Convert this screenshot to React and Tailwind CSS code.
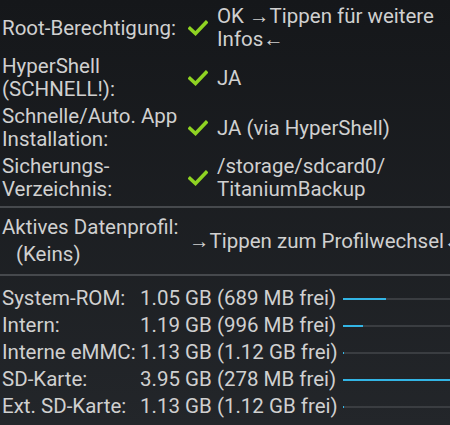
import React from 'react';

const Check = () => (
  <svg width="20" height="16" viewBox="0 0 20 16" className="shrink-0">
    <path d="M2 8.5 L7.5 13.5 L18 2.5" fill="none" stroke="#8fd322" strokeWidth="3.6" strokeLinecap="square" />
  </svg>
);

const checks = [
  { label: ['Root-Berechtigung:'], value: ['OK \u2192Tippen für weitere', 'Infos\u2190'] },
  { label: ['HyperShell', '(SCHNELL!):'], value: ['JA'] },
  { label: ['Schnelle/Auto. App', 'Installation:'], value: ['JA (via HyperShell)'] },
  { label: ['Sicherungs-', 'Verzeichnis:'], value: ['/storage/sdcard0/', 'TitaniumBackup'] },
];

const storage = [
  { name: 'System-ROM:', size: '1.05 GB (689 MB frei)', used: 40 },
  { name: 'Intern:', size: '1.19 GB (996 MB frei)', used: 19 },
  { name: 'Interne eMMC:', size: '1.13 GB (1.12 GB frei)', used: 1 },
  { name: 'SD-Karte:', size: '3.95 GB (278 MB frei)', used: 100 },
  { name: 'Ext. SD-Karte:', size: '1.13 GB (1.12 GB frei)', used: 1 },
];

const App = () => {
  return (
    <div
      className="w-[450px] h-[425px] overflow-hidden bg-gradient-to-b from-[#15171a] to-[#23262a] text-[#d0d0d0] text-[20.5px] leading-[23px]"
      style={{ fontFamily: 'Roboto, "Noto Sans", sans-serif' }}
    >
      {/* status rows */}
      <div className="flex flex-col gap-[4px] pt-[5px] pl-[2px]">
        {checks.map((c, i) => (
          <div key={i} className="flex items-center">
            <div className="w-[186px] shrink-0 whitespace-nowrap">
              {c.label.map((l) => (
                <div key={l}>{l}</div>
              ))}
            </div>
            <Check />
            <div className="ml-[9px]">
              {c.value.map((v) => (
                <div key={v} className="whitespace-nowrap">{v}</div>
              ))}
            </div>
          </div>
        ))}
      </div>

      <div className="mt-[5px] h-[2px] bg-[#46494d]" />

      {/* profile */}
      <div className="flex items-center h-[66px] pl-[2px]">
        <div className="w-[187px] shrink-0 whitespace-nowrap">
          <div className="leading-[27px]">Aktives Datenprofil:</div>
          <div className="leading-[27px] pl-[14px]">(Keins)</div>
        </div>
        <div className="shrink-0 whitespace-nowrap">{'\u2192Tippen zum Profilwechsel\u2190'}</div>
      </div>

      <div className="h-[2px] bg-[#46494d]" />

      {/* storage */}
      <div className="flex flex-col pt-[9px] pl-[2px]">
        {storage.map((s) => (
          <div key={s.name} className="flex items-center h-[27px]">
            <div className="w-[138px] shrink-0 whitespace-nowrap">{s.name}</div>
            <div className="w-[203px] shrink-0 whitespace-nowrap">{s.size}</div>
            <div className="flex-1 h-[2px] bg-[#3a3d41]">
              <div className="h-[2px] bg-[#33b5e5]" style={{ width: `${s.used}%` }} />
            </div>
          </div>
        ))}
      </div>
    </div>
  );
};

export default App;
